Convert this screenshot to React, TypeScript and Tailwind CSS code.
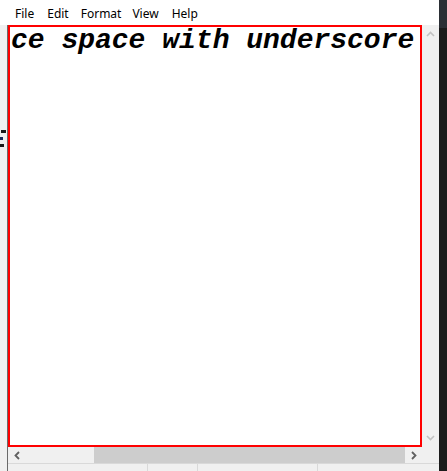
import React from 'react';

const menuItems = [
  { label: 'File', cls: '' },
  { label: 'Edit', cls: 'ml-[13px]' },
  { label: 'Format', cls: 'ml-[12px]' },
  { label: 'View', cls: 'ml-[11px]' },
  { label: 'Help', cls: 'ml-[13px]' },
];

const ArrowUp = () => (
  <svg width="9" height="6" viewBox="0 0 9 6" className="fill-none stroke-[#c2c2c2]" strokeWidth="1.6">
    <path d="M1 5 L4.5 1.5 L8 5" />
  </svg>
);
const ArrowDown = () => (
  <svg width="9" height="6" viewBox="0 0 9 6" className="fill-none stroke-[#c2c2c2]" strokeWidth="1.6">
    <path d="M1 1 L4.5 4.5 L8 1" />
  </svg>
);
const ArrowLeft = () => (
  <svg width="6" height="9" viewBox="0 0 6 9" className="fill-none stroke-[#606060]" strokeWidth="1.8">
    <path d="M5 1 L1.5 4.5 L5 8" />
  </svg>
);
const ArrowRight = () => (
  <svg width="6" height="9" viewBox="0 0 6 9" className="fill-none stroke-[#606060]" strokeWidth="1.8">
    <path d="M1 1 L4.5 4.5 L1 8" />
  </svg>
);

export default function App() {
  return (
    <div className="flex h-[471px] w-[447px] overflow-hidden bg-white">
      <div className="flex w-[439px] flex-col">
        {/* menu bar */}
        <div className="flex h-[25px] items-end bg-white pb-[2px] pl-[15px] font-['Noto_Sans',sans-serif] text-[12px] text-black">
          {menuItems.map((m) => (
            <span key={m.label} className={m.cls}>
              {m.label}
            </span>
          ))}
        </div>
        <div className="flex flex-1">
          {/* left gutter */}
          <div className="relative w-[7px] bg-[#f0f0f0]">
            <div className="absolute left-0 top-[105px] flex flex-col gap-[4px]">
              <span className="ml-[1px] h-[3px] w-[5px] bg-[#1a1a1a]" />
              <span className="h-[3px] w-[3px] bg-[#1a2a5a]" />
              <span className="h-[3px] w-[4px] bg-[#1a1a1a]" />
            </div>
          </div>
          <div className="flex flex-1 flex-col border-l border-[#6a6a6a]">
            <div className="flex flex-1">
              {/* editor */}
              <div className="flex-1 overflow-hidden border-2 border-[#ff0000] bg-white">
                <div className="whitespace-pre pl-[1px] font-['Liberation_Mono',monospace] text-[28px] font-bold italic leading-[28px] text-black">
                  ce space with underscore
                </div>
              </div>
              {/* vertical scrollbar */}
              <div className="flex w-[17px] flex-col items-center justify-between bg-[#f0f0f0] py-[6px]">
                <ArrowUp />
                <ArrowDown />
              </div>
            </div>
            {/* horizontal scrollbar */}
            <div className="flex h-[16px] items-center bg-[#f0f0f0]">
              <div className="flex w-[17px] justify-center">
                <ArrowLeft />
              </div>
              <div className="ml-[69px] h-full w-[311px] bg-[#cdcdcd]" />
              <div className="flex w-[17px] justify-center">
                <ArrowRight />
              </div>
            </div>
            {/* status bar */}
            <div className="flex h-[8px] border-t border-[#d9d9d9] bg-[#f0f0f0]">
              <div className="w-[140px] border-r border-[#d9d9d9]" />
              <div className="w-[50px] border-r border-[#d9d9d9]" />
              <div className="w-[120px] border-r border-[#d9d9d9]" />
            </div>
          </div>
        </div>
      </div>
      {/* dark right strip */}
      <div className="flex w-[8px] flex-col">
        <div className="h-[28px] bg-[#2b2f35]" />
        <div className="flex-1 bg-[#1b1b1b]" />
      </div>
    </div>
  );
}
